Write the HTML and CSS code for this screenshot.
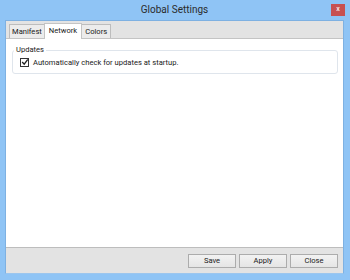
FILE: index.html
```html
<!DOCTYPE html>
<html>
<head>
<meta charset="utf-8">
<link rel="stylesheet" href="styles.css">
</head>
<body>
<div class="window">
  <div class="titlebar">
    <span class="title">Global Settings</span>
    <span class="close">x</span>
  </div>
  <div class="client">
    <div class="tabs">
      <div class="tab">Manifest</div>
      <div class="tab active">Network</div>
      <div class="tab">Colors</div>
    </div>
    <div class="panel">
      <fieldset class="group">
        <legend>Updates</legend>
        <label class="check">
          <span class="box"><svg width="8" height="8" viewBox="0 0 8 8"><path d="M1.2 4 L3.2 6.2 L6.8 1.5" fill="none" stroke="#222" stroke-width="1.3"/></svg></span>
          <span>Automatically check for updates at startup.</span>
        </label>
      </fieldset>
    </div>
    <div class="footer">
      <button class="btn">Save</button>
      <button class="btn">Apply</button>
      <button class="btn">Close</button>
    </div>
  </div>
</div>
</body>
</html>
```
FILE: styles.css
```css
html, body {
  margin: 0;
  padding: 0;
}
body {
  width: 350px;
  height: 280px;
  overflow: hidden;
  font-family: Roboto, "Noto Sans", "Liberation Sans", sans-serif;
  font-size: 7.6px;
  color: #1a1a1a;
}
.window {
  width: 350px;
  height: 280px;
  background: #8fc4f5;
  display: flex;
  flex-direction: column;
  box-sizing: border-box;
  padding: 0 6px 6px 5px;
}
.titlebar {
  height: 20px;
  flex: none;
  display: flex;
  align-items: center;
  justify-content: center;
  position: relative;
}
.title {
  font-size: 10px;
  color: #2b2b2b;
  margin-top: -1px;
}
.close {
  position: absolute;
  right: -1px;
  top: 4px;
  width: 14px;
  height: 12px;
  background: #c75050;
  color: #f4dcdc;
  font-size: 7px;
  font-weight: bold;
  line-height: 11px;
  text-align: center;
}
.client {
  flex: 1;
  display: flex;
  flex-direction: column;
  background: #e3e3e3;
  border: 1px solid #7eb1e2;
  border-bottom-color: #9cc6ee;
}
.tabs {
  display: flex;
  align-items: flex-end;
  height: 17px;
  padding-left: 3px;
  flex: none;
}
.tab {
  height: 13px;
  line-height: 13px;
  padding: 0 2px;
  background: #ececec;
  border: 1px solid #bdbdbd;
  border-bottom: none;
  margin-right: -1px;
}
.tab:last-child {
  padding: 0 3px;
}
.tab.active {
  height: 15px;
  line-height: 14px;
  background: #fff;
  border-color: #c4c4c4;
  position: relative;
  z-index: 1;
  margin-bottom: -1px;
  padding: 0 4px;
}
.panel {
  flex: 1;
  background: #fff;
  border-top: 1px solid #c4c4c4;
  border-bottom: 1px solid #bdbdbd;
  padding: 6px 5px 0 6px;
}
.group {
  margin: 0;
  padding: 1px 0 5px 7px;
  border: 1px solid #dfe5ec;
  border-radius: 3px;
  min-width: 0;
}
.group legend {
  padding: 0 2px;
  margin-left: -6px;
  line-height: 10px;
}
.check {
  display: flex;
  align-items: center;
  gap: 4px;
  height: 12px;
}
.box {
  width: 7px;
  height: 7px;
  border: 1px solid #333;
  background: #fff;
  display: flex;
  align-items: center;
  justify-content: center;
  overflow: hidden;
}
.box svg {
  flex: none;
}
.footer {
  height: 25px;
  flex: none;
  display: flex;
  justify-content: flex-end;
  align-items: center;
  gap: 3px;
  padding-right: 5px;
}
.btn {
  width: 48px;
  height: 14px;
  padding: 0;
  margin: 0;
  font-family: inherit;
  font-size: 7.6px;
  color: #1a1a1a;
  background: linear-gradient(#f2f2f2, #e5e5e5);
  border: 1px solid #acacac;
  border-radius: 0;
  line-height: 12px;
}
```
